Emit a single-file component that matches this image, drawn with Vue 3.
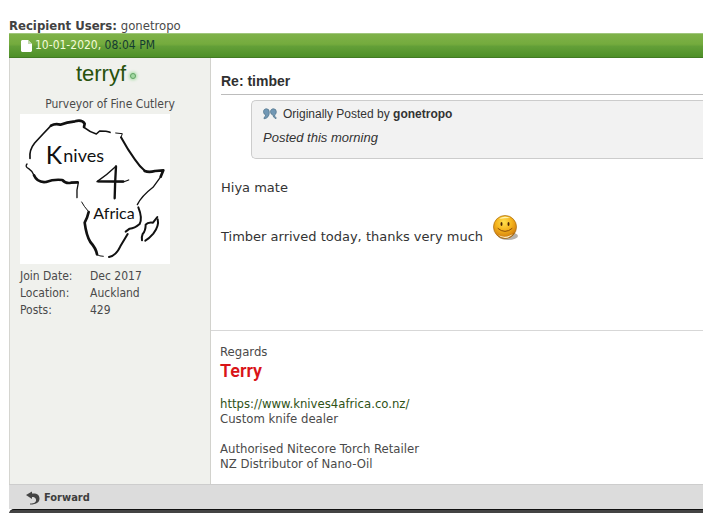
<script setup>
const stats = [
  { label: 'Join Date:', value: 'Dec 2017' },
  { label: 'Location:', value: 'Auckland' },
  { label: 'Posts:', value: '429' },
]
</script>

<template>
  <main class="page">
    <p class="recipients"><strong>Recipient Users:</strong> <span>gonetropo</span></p>
    <article class="post">
      <header class="posthead">
        <svg class="doc" viewBox="0 0 11 12" aria-hidden="true">
          <path d="M1 0h6l4 4v7l-1 1H1l-1-1V1z" fill="#fff" />
          <path d="M7 0v4h4z" fill="#c3d9b0" />
        </svg>
        <span class="date">10-01-2020, <span class="time">08:04 PM</span></span>
      </header>
      <div class="details">
        <aside class="user">
          <div class="name">
            <a href="#terryf">terryf</a>
            <span class="online"></span>
          </div>
          <p class="title">Purveyor of Fine Cutlery</p>
          <svg class="avatar" viewBox="15 12 450 450" role="img" aria-label="Knives 4 Africa">
            <rect x="15" y="12" width="450" height="450" fill="#fff" />
            <g fill="none" stroke="#111" stroke-linecap="round" stroke-linejoin="round">
              <path d="M45 145Q42 120 59 99L84 72L108 47" stroke-width="5" />
              <path d="M108 47Q120 40 136 44Q155 37 180 34Q201 28 209 41L207 51" stroke-width="8" />
              <path d="M207 52Q223 65 244 72L254 63Q276 63 285 67" stroke-width="5" />
              <path d="M302 69L322 71L318 82" stroke-width="3" />
              <path d="M318 82Q338 119 360 149Q374 170 390 183" stroke-width="6" />
              <path d="M389 183Q402 188 420 183L445 181L437 200" stroke-width="8" />
              <path d="M438 199L414 232Q380 258 367 284" stroke-width="4" />
              <path d="M36 162Q29 170 41 176Q52 183 57 196" stroke-width="4" />
              <path d="M57 196Q67 219 93 216Q117 207 142 210Q153 222 168 218L188 217" stroke-width="8" />
              <path d="M190 218Q184 239 186 263" stroke-width="4" />
              <path d="M200 276Q206 288 220 304" stroke-width="3" />
              <path d="M221 306Q217 324 209 338Q214 377 226 396Q243 415 246 433" stroke-width="8" />
              <path d="M246 434Q254 439 265 439" stroke-width="3" />
              <path d="M282 441Q303 437 316 409L338 372" stroke-width="6" />
              <path d="M370 292Q383 324 374 342Q359 355 344 356L332 365" stroke-width="6" />
              <path d="M427 321L414 338Q398 336 392 344Q392 362 383 372Q379 381 381 391" stroke-width="6" />
              <path d="M428 328Q433 348 415 371Q402 386 391 392" stroke-width="6" />
              <path d="M341 210L325 216L246 215Q276 195 303 169" stroke-width="4" />
              <path d="M303 169Q300 215 299 265" stroke-width="7" />
              <path d="M250 214L325 214" stroke-width="7" />
            </g>
            <g class="lettering" fill="#111">
              <text x="92" y="162" font-size="74">K</text>
              <text x="145" y="156" font-size="54">nives</text>
              <text x="235" y="328" font-size="48">Africa</text>
            </g>
          </svg>
          <dl class="stats">
            <template v-for="s in stats" :key="s.label">
              <dt>{{ s.label }}</dt>
              <dd>{{ s.value }}</dd>
            </template>
          </dl>
        </aside>
        <section class="body">
          <h2>Re: timber</h2>
          <blockquote>
            <div class="by">
              <svg class="quote" viewBox="0 0 14 12" aria-hidden="true">
                <g fill="#7298b5" stroke="#56788f" stroke-width=".8">
                  <path d="M3.500 .8C1.500 .8 .5 2 .5 3.800Q.5 6.500 2.800 6.800Q2.600 8.600 1 9.600V10.800Q6.300 10 6.300 4.200Q6.200 .8 3.500 .8z" />
                  <path d="M10.500 .8C8.500 .8 7.500 2 7.500 3.800Q7.500 6.500 9.800 6.800Q10 9.600 13 10.800V9.600Q11.600 8.600 11.600 7Q13.300 6.200 13.300 3.800Q13.200 .8 10.500 .8z" />
                </g>
              </svg>
              <span>Originally Posted by <strong>gonetropo</strong></span>
            </div>
            <p class="quoted">Posted this morning</p>
          </blockquote>
          <div class="message">
            <p>Hiya mate</p>
            <p class="thanks">
              <span>Timber arrived today, thanks very much</span>
              <svg class="smile" viewBox="0 0 26 28" role="img" aria-label="Smile">
                <defs>
                  <radialGradient id="face" cx=".45" cy=".3" r=".7">
                    <stop offset="0" stop-color="#ffe04f" />
                    <stop offset=".5" stop-color="#f5b31c" />
                    <stop offset=".85" stop-color="#d98a12" />
                    <stop offset="1" stop-color="#955407" />
                  </radialGradient>
                </defs>
                <ellipse cx="15" cy="22" rx="10" ry="4" fill="#b5b1ab" />
                <circle cx="12" cy="13" r="11.5" fill="url(#face)" stroke="#a96d12" stroke-width=".7" />
                <path d="M5 21Q12 25 20 20Q17 24 12 24Q8 24 5 21z" fill="#fff0c8" />
                <path d="M6 5Q11 1 17 4Q12 4 6 5z" fill="#fff4b0" />
                <ellipse cx="8.5" cy="10" rx="1" ry="2" fill="#4a2605" />
                <ellipse cx="15.5" cy="10" rx="1" ry="2" fill="#4a2605" />
                <path d="M5 14.5Q12 20.5 19 14.5" fill="none" stroke="#8c4d08" stroke-width="1" stroke-linecap="round" />
              </svg>
            </p>
          </div>
          <footer class="signature">
            <p>Regards</p>
            <p class="signed">Terry</p>
            <p class="gap"><a href="https://www.knives4africa.co.nz/">https://www.knives4africa.co.nz/</a></p>
            <p>Custom knife dealer</p>
            <p class="gap">Authorised Nitecore Torch Retailer</p>
            <p>NZ Distributor of Nano-Oil</p>
          </footer>
        </section>
      </div>
      <div class="postfoot">
        <a href="#forward">
          <svg viewBox="0 0 14 14" aria-hidden="true">
            <path d="M0 4L6 .5V2.500C11 2 13.500 4 13.500 7.500C13.500 11 11 13.500 4 13.500V12.500C8.500 12.500 10.500 11 10 8.500C9.500 6.500 8 6 6 6V8z" fill="#444" />
          </svg>
          Forward
        </a>
      </div>
    </article>
    <div class="nextbar"></div>
  </main>
</template>

<style>
body {
  margin: 0;
  background: #fff;
  overflow: hidden;
}
</style>

<style scoped>
.page {
  padding: 18px 0 0 9px;
  font: 12px/15px "DejaVu Sans Condensed", "DejaVu Sans", Tahoma, sans-serif;
  font-stretch: condensed;
  color: #4a4a4a;
}
p, h2, dl, dd, blockquote {
  margin: 0;
}
a {
  color: #2f5216;
  text-decoration: none;
}
.recipients {
  font-size: 13px;
}
.recipients strong {
  color: #424242;
}
.posthead {
  display: flex;
  align-items: center;
  gap: 3px;
  box-sizing: border-box;
  height: 25px;
  padding-left: 12px;
  border-top: 1px solid #a0c67c;
  border-bottom: 1px solid #427b23;
  background: linear-gradient(#7fb24a, #74ab3d 44%, #639f38 54%, #4e9028);
  color: #f3fbd8;
}
.doc {
  width: 11px;
  height: 12px;
}
.time {
  color: #123b31;
}
.details {
  display: grid;
  grid-template-columns: 201px 1fr;
  border-left: 1px solid #d5d5d0;
}
.user {
  box-sizing: border-box;
  padding: 4px 10px 0;
  border-right: 1px solid #d2d2cd;
  background: #f0f1ed;
}
.name {
  display: flex;
  justify-content: center;
  align-items: center;
  gap: 4px;
  padding-right: 8px;
  font: 22px/24px "Liberation Sans", Arial, sans-serif;
}
.name a {
  color: #28520d;
}
.online {
  box-sizing: border-box;
  width: 6px;
  height: 6px;
  margin-top: 4px;
  border: 1px solid #62a365;
  border-radius: 50%;
  background: #a2d8a1;
  box-shadow: 0 0 3px 1px #a9dda7;
}
.title {
  margin-top: 11px;
  text-align: center;
}
.avatar {
  display: block;
  width: 150px;
  height: 150px;
  margin-top: 2px;
}
.lettering {
  font-family: Lato, sans-serif;
}
.stats {
  display: grid;
  grid-template-columns: 70px 1fr;
  margin-top: 4px;
  line-height: 17px;
}
.body {
  display: flex;
  flex-direction: column;
  min-width: 0;
  padding-top: 14px;
}
h2 {
  margin-left: 10px;
  padding-bottom: 4px;
  border-bottom: 1px solid #bcbcbc;
  font: bold 14px/18px "Liberation Sans", Arial, sans-serif;
  color: #303030;
}
blockquote {
  box-sizing: border-box;
  margin: 5px 0 0 40px;
  padding: 5px 11px 12px;
  border: 1px solid #ccc;
  border-right: 0;
  border-radius: 5px 0 0 5px;
  background: #f2f2f2;
  color: #333;
  font-family: "Liberation Sans", Arial, sans-serif;
}
.by {
  display: flex;
  align-items: center;
  gap: 6px;
  line-height: 16px;
}
.quote {
  width: 14px;
  height: 12px;
}
.quoted {
  margin-top: 7px;
  font-size: 13px;
  line-height: 17px;
  font-style: italic;
}
.message {
  padding: 20px 10px 84px;
  color: #333;
  font: 13px/18px "DejaVu Sans", Verdana, sans-serif;
}
.thanks {
  display: flex;
  align-items: flex-end;
  gap: 10px;
  margin-top: 17px;
}
.smile {
  width: 26px;
  height: 28px;
  margin-bottom: 4px;
}
.signature {
  padding: 13px 9px;
  border-top: 1px solid #d7d7d7;
  font-size: 13px;
}
.signed {
  margin-top: 2px;
  font: 600 18px/20px Roboto, "Liberation Sans", sans-serif;
  color: #d91418;
}
.gap {
  margin-top: 15px;
}
.postfoot {
  display: flex;
  padding: 5px 17px 4px;
  border-top: 1px solid #cdcdcd;
  background: #dcdcdc;
}
.postfoot a {
  display: flex;
  align-items: center;
  gap: 4px;
  font-size: 11px;
  font-weight: bold;
  color: #3e3e3e;
}
.postfoot svg {
  width: 14px;
  height: 14px;
}
.nextbar {
  height: 8px;
  border-top: 1px solid #111;
  border-radius: 5px 0 0 0;
  background: #444;
}
</style>
